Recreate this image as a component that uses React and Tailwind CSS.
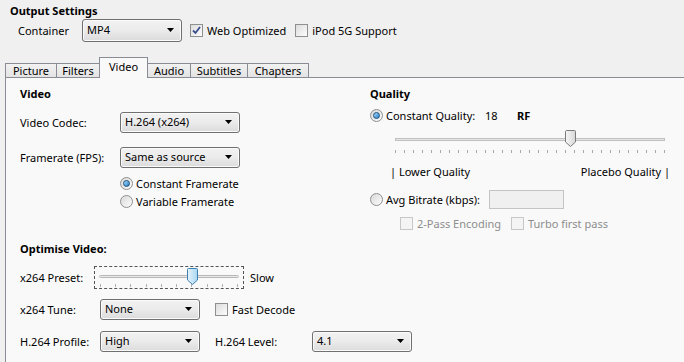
import React from 'react';

const Arrow = () => (
  <svg width="7" height="4" viewBox="0 0 7 4" className="shrink-0">
    <polygon points="0,0 7,0 3.5,4" fill="#000" />
  </svg>
);

// Vista style combo box
const Dropdown = ({ value, className = '' }) => (
  <div
    className={`flex h-full shrink-0 items-center justify-between rounded-[3px] border border-[#707070] bg-gradient-to-b from-[#f2f2f2] via-[#ebebeb] to-[#dbdbdb] pl-[4px] pr-[7px] pb-[2px] shadow-[inset_0_0_0_1px_#fbfbfb] ${className}`}
  >
    <span>{value}</span>
    <Arrow />
  </div>
);

const Checkbox = ({ checked, disabled }) => (
  <div
    className={`flex h-[13px] w-[13px] shrink-0 items-center justify-center border ${
      disabled ? 'border-[#c7c7c7] bg-[#f4f4f4]' : 'border-[#8e8f8f] bg-gradient-to-br from-[#dcdcdc] to-[#fdfdfd]'
    }`}
  >
    {checked && (
      <svg width="9" height="9" viewBox="0 0 9 9">
        <path d="M1 4.5 L3.5 7 L8 1" fill="none" stroke="#3a4f8c" strokeWidth="1.8" />
      </svg>
    )}
  </div>
);

const Radio = ({ checked }) => (
  <div className="flex h-[13px] w-[13px] shrink-0 items-center justify-center rounded-full border border-[#8e8f8f] bg-gradient-to-br from-[#d9d9d9] to-[#fcfcfc]">
    {checked && (
      <div className="h-[7px] w-[7px] rounded-full border border-[#1b4e7a] bg-gradient-to-br from-[#a6dcff] to-[#1c7ec4]" />
    )}
  </div>
);

const Thumb = ({ blue }) => (
  <svg width="11" height="17" viewBox="0 0 11 17">
    <defs>
      <linearGradient id={blue ? 'tb' : 'tg'} x1="0" x2="1" y1="0" y2="0">
        <stop offset="0" stopColor={blue ? '#e5f4fc' : '#f7f7f7'} />
        <stop offset="1" stopColor={blue ? '#a9d6f1' : '#d6d6d6'} />
      </linearGradient>
    </defs>
    <path
      d="M1.5 0.5 H9.5 Q10.5 0.5 10.5 1.5 V12 L5.5 16.5 L0.5 12 V1.5 Q0.5 0.5 1.5 0.5 Z"
      fill={`url(#${blue ? 'tb' : 'tg'})`}
      stroke={blue ? '#3c7fb1' : '#7a7a7a'}
    />
  </svg>
);

const Tab = ({ label, active, className = '' }) =>
  active ? (
    <div className={`-ml-px flex h-[21px] shrink-0 items-center justify-center border border-b-0 border-[#898c95] bg-[#f9f9f9] pb-[3px] ${className}`}>
      {label}
    </div>
  ) : (
    <div className={`-ml-px mb-px flex h-[14px] shrink-0 items-center justify-center border border-b-0 border-[#898c95] bg-gradient-to-b from-[#f2f2f2] to-[#e3e3e3] first:ml-0 ${className}`}>
      {label}
    </div>
  );

const App = () => {
  const qualityTicks = Array.from({ length: 31 });
  const presetTicks = Array.from({ length: 10 });

  return (
    <div className="h-[362px] w-[684px] overflow-hidden bg-[#f0f0f0] font-['Noto_Sans',sans-serif] text-[11px] leading-[15px] text-black">
      {/* Output settings */}
      <div className="h-[19px] pl-[10px] pt-[3px] font-bold">Output Settings</div>
      <div className="flex h-[23px] items-center pl-[18px]">
        <span className="w-[64px] shrink-0">Container</span>
        <Dropdown value="MP4" className="w-[100px]" />
        <div className="ml-[8px] flex items-center gap-[4px]">
          <Checkbox checked />
          <span>Web Optimized</span>
        </div>
        <div className="ml-[9px] flex items-center gap-[4px]">
          <Checkbox />
          <span>iPod 5G Support</span>
        </div>
      </div>

      {/* Tabs */}
      <div className="relative z-10 -mb-px mt-[15px] flex h-[21px] items-end pl-[5px]">
        <Tab label="Picture" className="w-[52px]" />
        <Tab label="Filters" className="w-[44px]" />
        <Tab label="Video" active className="w-[49px]" />
        <Tab label="Audio" className="w-[44px]" />
        <Tab label="Subtitles" className="w-[58px]" />
        <Tab label="Chapters" className="w-[62px]" />
      </div>

      <div className="ml-[5px] flex h-[300px] border-l border-t border-[#898c95] bg-[#f9f9f9] pl-[14px]">
        {/* Left column */}
        <div className="flex w-[350px] shrink-0 flex-col whitespace-nowrap">
          <div className="mt-[7px] flex h-[16px] items-center font-bold">Video</div>
          <div className="mt-[11px] flex h-[21px] items-center">
            <span className="w-[100px] shrink-0">Video Codec:</span>
            <Dropdown value="H.264 (x264)" className="w-[120px]" />
          </div>
          <div className="mt-[14px] flex h-[21px] items-center">
            <span className="w-[100px] shrink-0">Framerate (FPS):</span>
            <Dropdown value="Same as source" className="w-[120px]" />
          </div>
          <div className="mt-[7px] flex h-[16px] items-center gap-[3px] pl-[100px]">
            <Radio checked />
            <span>Constant Framerate</span>
          </div>
          <div className="mt-[2px] flex h-[16px] items-center gap-[3px] pl-[100px]">
            <Radio />
            <span>Variable Framerate</span>
          </div>

          <div className="mt-[31px] flex h-[16px] items-center font-bold">Optimise Video:</div>
          <div className="mt-[10px] flex h-[23px] items-center">
            <span className="w-[74px] shrink-0">x264 Preset:</span>
            <div className="flex h-full w-[150px] shrink-0 flex-col justify-center border border-dashed border-[#555] px-[4px]">
              <div className="relative flex h-[16px] items-center">
                <div className="h-[3px] w-full rounded-full border border-[#b8b8b8] bg-[#e8e8e8]" />
                <div className="absolute left-[88px] top-0">
                  <Thumb blue />
                </div>
              </div>
              <div className="flex h-[3px] justify-between px-[1px]">
                {presetTicks.map((_, i) => (
                  <span key={i} className="h-[3px] w-px bg-[#b0b0b0]" />
                ))}
              </div>
            </div>
            <span className="ml-[6px]">Slow</span>
          </div>
          <div className="mt-[10px] flex h-[21px] items-center">
            <span className="w-[80px] shrink-0">x264 Tune:</span>
            <Dropdown value="None" className="w-[100px]" />
            <div className="ml-[15px] flex items-center gap-[4px]">
              <Checkbox />
              <span>Fast Decode</span>
            </div>
          </div>
          <div className="mt-[11px] flex h-[21px] items-center">
            <span className="w-[80px] shrink-0">H.264 Profile:</span>
            <Dropdown value="High" className="w-[100px]" />
            <span className="ml-[15px] w-[97px] shrink-0">H.264 Level:</span>
            <Dropdown value="4.1" className="w-[100px]" />
          </div>
        </div>

        {/* Right column */}
        <div className="flex flex-1 flex-col whitespace-nowrap">
          <div className="mt-[7px] flex h-[16px] items-center font-bold">Quality</div>
          <div className="mt-[6px] flex h-[16px] items-center">
            <Radio checked />
            <span className="ml-[3px] w-[99px]">Constant Quality:</span>
            <span className="w-[32px]">18</span>
            <span className="font-bold">RF</span>
          </div>
          <div className="ml-[25px] mt-[7px] flex h-[25px] w-[270px] flex-col">
            <div className="relative flex h-[18px] items-center">
              <div className="h-[3px] w-full border border-[#c0c0c0] bg-[#e6e6e6]" />
              <div className="absolute left-[170px] top-0">
                <Thumb />
              </div>
            </div>
            <div className="mt-[2px] flex h-[3px] justify-between">
              {qualityTicks.map((_, i) => (
                <span key={i} className="h-[3px] w-px bg-[#a8a8a8]" />
              ))}
            </div>
          </div>
          <div className="ml-[20px] mt-[8px] flex h-[16px] w-[280px] items-center justify-between">
            <span>| Lower Quality</span>
            <span>Placebo Quality |</span>
          </div>
          <div className="mt-[10px] flex h-[20px] items-center">
            <Radio />
            <span className="ml-[3px] w-[103px]">Avg Bitrate (kbps):</span>
            <div className="h-[19px] w-[75px] border border-[#c4c4c4] bg-[#f0f0f0]" />
          </div>
          <div className="mt-[6px] flex h-[16px] items-center pl-[30px] text-[#8d8d8d]">
            <Checkbox disabled />
            <span className="ml-[4px] w-[94px]">2-Pass Encoding</span>
            <Checkbox disabled />
            <span className="ml-[4px]">Turbo first pass</span>
          </div>
        </div>
      </div>
    </div>
  );
};

export default App;
